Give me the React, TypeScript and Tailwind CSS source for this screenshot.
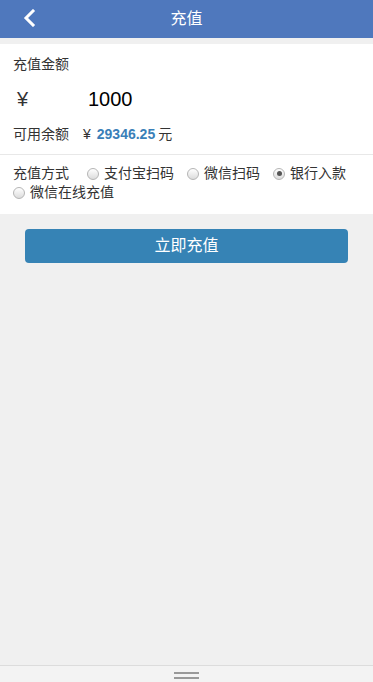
import React, { useState } from 'react';

const options = ['支付宝扫码', '微信扫码', '银行入款', '微信在线充值'];

const Radio = ({ checked }: { checked: boolean }) => (
  <span className="inline-flex items-center justify-center w-[12px] h-[12px] rounded-full border border-[#b5b5b5] bg-gradient-to-b from-[#ffffff] to-[#dcdcdc]">
    {checked && <span className="block w-[5px] h-[5px] rounded-full bg-[#555]" />}
  </span>
);

const App = () => {
  const [method, setMethod] = useState('银行入款');

  return (
    <div
      className="h-screen flex flex-col bg-[#f0f0f0] text-[#333]"
      style={{ fontFamily: '"Liberation Sans", "Noto Sans CJK SC", sans-serif' }}
    >
      {/* Header */}
      <header className="h-[38px] bg-[#4f78bd] flex items-center relative">
        <button className="absolute left-[22px] top-[9px] p-0">
          <svg width="16" height="18" viewBox="0 0 16 18" fill="none">
            <polyline points="11,2 4,9 11,16" stroke="#fff" strokeWidth="3" strokeLinecap="square" />
          </svg>
        </button>
        <h1 className="flex-1 text-center text-white text-[16px]">充值</h1>
      </header>

      {/* Form card */}
      <div className="mt-[6px] bg-white">
        <div className="px-[13px] pt-[10px] pb-[10px] border-b border-[#e8e8e8]">
          <div className="text-[14px] leading-[20px]">充值金额</div>
          <div className="h-[50px] flex items-center">
            <span className="w-[75px] pl-[4px] text-[20px] text-[#333]">¥</span>
            <span className="text-[20px] text-black">1000</span>
          </div>
          <div className="text-[14px] leading-[20px] flex items-center">
            <span>可用余额</span>
            <span className="ml-[14px]">¥</span>
            <span className="ml-[6px] font-bold text-[#3a7fb8]">29346.25</span>
            <span className="ml-[3px]">元</span>
          </div>
        </div>
        <div className="px-[13px] pt-[9px] pb-[12px] flex flex-wrap items-center gap-x-[13px] text-[14px] leading-[19px]">
          <span className="mr-[5px]">充值方式</span>
          {options.map((o) => (
            <label key={o} className="inline-flex items-center cursor-pointer" onClick={() => setMethod(o)}>
              <Radio checked={method === o} />
              <span className="ml-[5px]">{o}</span>
            </label>
          ))}
        </div>
      </div>

      <div className="px-[25px] mt-[15px]">
        <button className="w-full h-[34px] rounded-[4px] bg-[#3683b5] text-white text-[16px]">立即充值</button>
      </div>

      <div className="flex-1" />

      {/* Bottom handle bar */}
      <div className="h-[17px] border-t border-[#dcdcdc] bg-[#f3f3f3] flex flex-col items-center pt-[6px] gap-[3px]">
        <span className="block w-[25px] h-[2px] bg-[#999]" />
        <span className="block w-[25px] h-[2px] bg-[#999]" />
      </div>
    </div>
  );
};

export default App;
